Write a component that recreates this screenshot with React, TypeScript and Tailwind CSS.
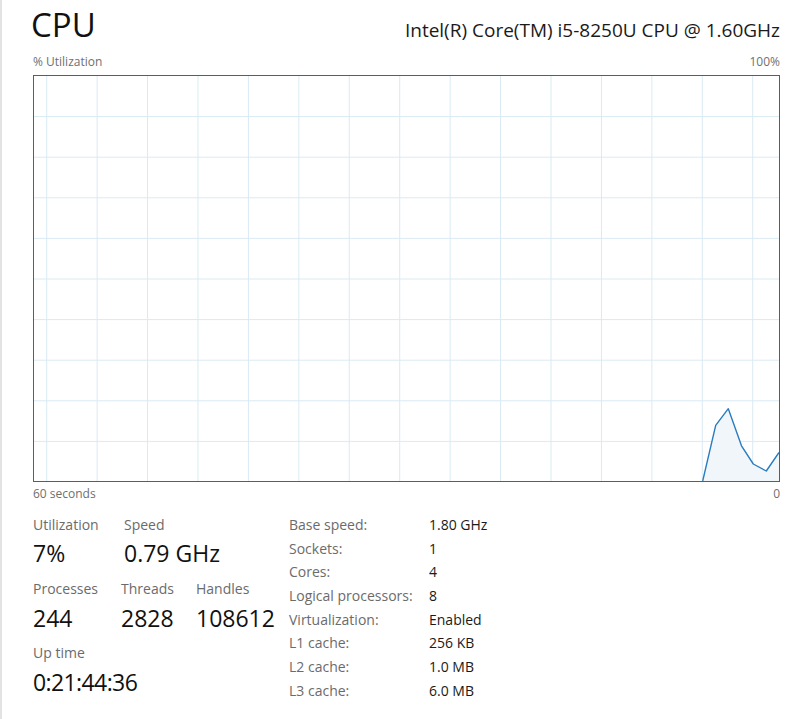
const vLines = Array.from({ length: 15 }, (_, i) => 12.7 + i * 50.43);
const hLines = Array.from({ length: 9 }, (_, i) => 40.6 * (i + 1));
const trace: [number, number][] = [
  [668.7, 405],
  [681.7, 349.3],
  [694.3, 332.7],
  [707.5, 369.8],
  [719.3, 388],
  [732.3, 395],
  [745, 376.5],
];

const details: [string, string][] = [
  ["Base speed:", "1.80 GHz"],
  ["Sockets:", "1"],
  ["Cores:", "4"],
  ["Logical processors:", "8"],
  ["Virtualization:", "Enabled"],
  ["L1 cache:", "256 KB"],
  ["L2 cache:", "1.0 MB"],
  ["L3 cache:", "6.0 MB"],
];

function Stat({ label, value, width, gap }: { label: string; value: string; width?: string; gap: string }) {
  return (
    <div className={width}>
      <div className="text-[14px] leading-[20px] text-[#6b6b6b]">{label}</div>
      <div className={`${gap} text-[23px] leading-[28px] text-[#111]`}>{value}</div>
    </div>
  );
}

function Graph() {
  const line = trace.map(([x, y]) => `${x},${y}`).join(" ");
  return (
    <div className="mt-[5px] h-[407px] w-[747px] border border-[#1c6fae]">
      <svg width="745" height="405" className="block">
        {vLines.map((x) => (
          <line key={`v${x}`} x1={x} y1={0} x2={x} y2={405} stroke="#d9eaf4" strokeWidth={1} />
        ))}
        {hLines.map((y) => (
          <line key={`h${y}`} x1={0} y1={y} x2={745} y2={y} stroke="#d9eaf4" strokeWidth={1} />
        ))}
        <polygon points={`${line} 745,405`} fill="#f1f6fa" />
        <polyline points={line} fill="none" stroke="#2a7cbf" strokeWidth={1.4} strokeLinejoin="round" />
      </svg>
    </div>
  );
}

export default function App() {
  return (
    <div className="h-[719px] w-[800px] overflow-hidden border-l-2 border-[#e3e3e3] bg-white pl-[31px] pr-[20px] font-['Open_Sans',sans-serif]">
      <div className="flex items-baseline justify-between pt-[9px]">
        <span className="-ml-[2px] text-[33px] leading-[32px] text-[#111]">CPU</span>
        <span className="text-[19px] leading-[24px] text-[#1a1a1a]">Intel(R) Core(TM) i5-8250U CPU @ 1.60GHz</span>
      </div>

      <div className="mt-[12px] flex justify-between text-[12px] leading-[16px] text-[#6f6f6f]">
        <span>% Utilization</span>
        <span>100%</span>
      </div>

      <Graph />

      <div className="mt-[4px] flex justify-between text-[12px] leading-[16px] text-[#6f6f6f]">
        <span>60 seconds</span>
        <span>0</span>
      </div>

      <div className="mt-[11px] flex">
        <div className="w-[256px] pt-[2px]">
          <div className="flex">
            <Stat label="Utilization" value="7%" width="w-[91px]" gap="mt-[4px]" />
            <Stat label="Speed" value="0.79 GHz" gap="mt-[4px]" />
          </div>
          <div className="mt-[12px] flex">
            <Stat label="Processes" value="244" width="w-[88px]" gap="mt-[5px]" />
            <Stat label="Threads" value="2828" width="w-[75px]" gap="mt-[5px]" />
            <Stat label="Handles" value="108612" gap="mt-[5px]" />
          </div>
          <div className="mt-[11px]">
            <div className="text-[14px] leading-[20px] text-[#6b6b6b]">Up time</div>
            <div className="mt-[5px] text-[23px] leading-[28px] tracking-[-0.6px] text-[#111]">0:21:44:36</div>
          </div>
        </div>

        <div className="grid grid-cols-[140px_auto] text-[14px] leading-[23.67px]">
          {details.map(([k, v]) => (
            <div key={k} className="contents">
              <span className="text-[#6b6b6b]">{k}</span>
              <span className="text-[#1a1a1a]">{v}</span>
            </div>
          ))}
        </div>
      </div>
    </div>
  );
}
